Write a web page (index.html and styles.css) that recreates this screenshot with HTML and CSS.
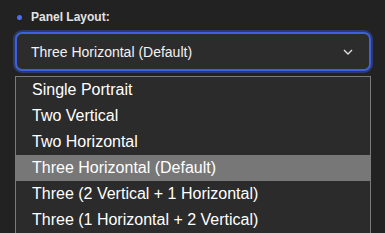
FILE: index.html
```html
<!DOCTYPE html>
<html>
<head>
<meta charset="utf-8">
<link rel="stylesheet" href="styles.css">
</head>
<body>
<div class="panel">
  <div class="label"><span class="dot"></span><span class="label-text">Panel Layout:</span></div>
  <div class="select-wrap">
    <div class="select">
      <span class="value">Three Horizontal (Default)</span>
      <svg class="chev" width="10" height="6" viewBox="0 0 10 6"><path d="M1 1 L5 5 L9 1" fill="none" stroke="#dddddd" stroke-width="1.4"/></svg>
    </div>
    <div class="menu">
      <div class="opt">Single Portrait</div>
      <div class="opt">Two Vertical</div>
      <div class="opt">Two Horizontal</div>
      <div class="opt sel">Three Horizontal (Default)</div>
      <div class="opt">Three (2 Vertical + 1 Horizontal)</div>
      <div class="opt">Three (1 Horizontal + 2 Vertical)</div>
    </div>
  </div>
</div>
</body>
</html>
```
FILE: styles.css
```css
html, body {
  margin: 0;
  padding: 0;
  background: #222222;
  height: 100%;
  overflow: hidden;
}
body {
  font-family: "Liberation Sans", Arial, sans-serif;
}
.panel {
  padding: 9px 14px 0 15px;
}
.label {
  display: flex;
  align-items: center;
  height: 16px;
  padding-left: 2px;
}
.dot {
  width: 5px;
  height: 5px;
  border-radius: 50%;
  background: #4c6ef5;
  margin-right: 9px;
}
.label-text {
  font-size: 12px;
  font-weight: bold;
  color: #e2e2e2;
}
.select-wrap {
  position: relative;
  margin-top: 7px;
  width: 356px;
}
.select {
  box-sizing: border-box;
  height: 39px;
  border: 2px solid #3f5fdc;
  border-radius: 7px;
  box-shadow: 0 0 0 2px #2d3a70;
  background: #2c2c2c;
  display: flex;
  align-items: center;
  justify-content: space-between;
  padding: 0 16px 0 14px;
}
.value {
  font-size: 14px;
  color: #f2f2f2;
}
.chev {
  display: block;
}
.menu {
  position: absolute;
  left: 0;
  top: 44px;
  width: 356px;
  box-sizing: border-box;
  border: 1px solid #7a7a7a;
  background: #2b2b2b;
}
.opt {
  height: 26px;
  line-height: 26px;
  padding-left: 16px;
  font-size: 16px;
  color: #ffffff;
  white-space: nowrap;
}
.opt.sel {
  background: #777777;
}
```
